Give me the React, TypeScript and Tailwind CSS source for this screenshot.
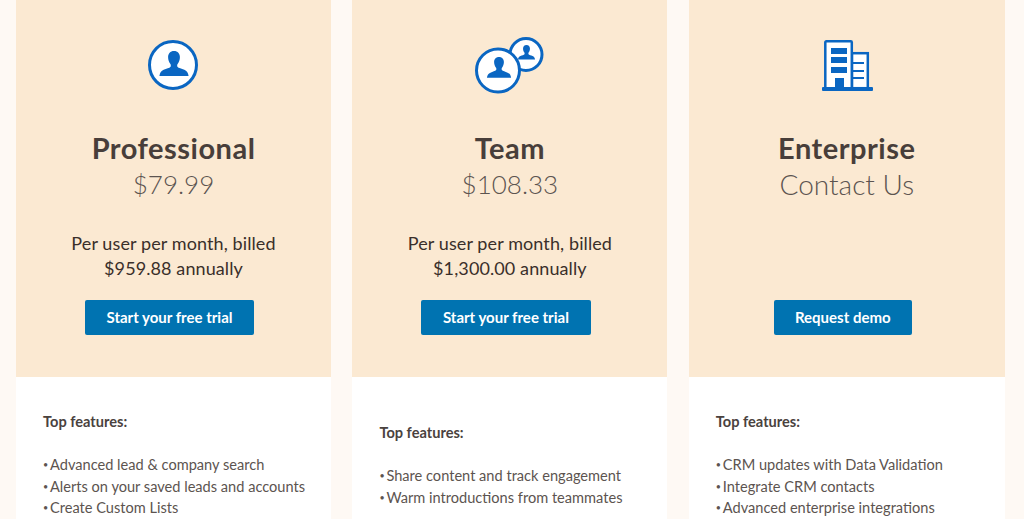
// Pricing plans: three cards with a tinted header and a white feature list.
import type { ReactNode } from "react";

function Bust({ cx, cy, s }: { cx: number; cy: number; s: number }) {
  // head and shoulders, drawn around a 0,0 center in a unit of s
  return (
    <path
      transform={`translate(${cx} ${cy}) scale(${s})`}
      d="M0 -15c-4.6 0-7.2 3.2-7.2 7.4 0 3.2 1 6.2 2.8 8.4 .6 .8 .7 2.6 .2 3.4-1.2 1.6-5.2 2.4-8.4 3.8-3 1.4-4.6 3.4-5.2 7.4h35.6c-.6-4-2.2-6-5.2-7.4-3.2-1.4-7.2-2.2-8.4-3.8-.5-.8-.4-2.6 .2-3.4 1.8-2.2 2.8-5.2 2.8-8.4 0-4.2-2.6-7.4-7.2-7.4z"
      fill="#0a66c2"
    />
  );
}

function ProIcon() {
  return (
    <svg width="50" height="50" viewBox="0 0 50 50">
      <circle cx="25" cy="25" r="23.5" fill="#fff" stroke="#0a66c2" strokeWidth="3" />
      <Bust cx={26} cy={23.3} s={0.82} />
    </svg>
  );
}

function TeamIcon() {
  return (
    <svg width="69" height="57" viewBox="0 0 69 57">
      <circle cx="51" cy="17.5" r="16" fill="#fff" stroke="#0a66c2" strokeWidth="3" />
      <Bust cx={51.5} cy={15.2} s={0.48} />
      <circle cx="23" cy="33.5" r="21.5" fill="#fff" stroke="#0a66c2" strokeWidth="3" />
      <Bust cx={24} cy={30.2} s={0.68} />
    </svg>
  );
}

function BuildingIcon() {
  return (
    <svg width="52" height="51" viewBox="0 0 52 51">
      <rect x="30" y="13.2" width="15.8" height="35" fill="#fff" stroke="#0a66c2" strokeWidth="2.5" />
      <rect x="3.3" y="1.3" width="26.5" height="47" rx="1" fill="#fff" stroke="#0a66c2" strokeWidth="2.5" />
      <rect x="9" y="8" width="16" height="6" fill="#0a66c2" />
      <rect x="9" y="17" width="16" height="6" fill="#0a66c2" />
      <rect x="9" y="27" width="16" height="6" fill="#0a66c2" />
      <rect x="13" y="38" width="9" height="10" fill="#0a66c2" />
      <rect x="31" y="22" width="11" height="2" fill="#0a66c2" />
      <rect x="31" y="30" width="11" height="2" fill="#0a66c2" />
      <rect x="31" y="37" width="11" height="2" fill="#0a66c2" />
      <rect x="0" y="47" width="51" height="4" rx="1" fill="#0a66c2" />
    </svg>
  );
}

type Plan = {
  name: string;
  price: string;
  priceSize: string;
  icon: ReactNode;
  iconBox: string;
  billed: string[];
  cta: string;
  ctaWidth: string;
  listTop: string;
  features: string[];
};

const PLANS: Plan[] = [
  {
    name: "Professional",
    price: "$79.99",
    priceSize: "text-[26px]",
    icon: <ProIcon />,
    iconBox: "pb-[6px] pr-[2px]",
    billed: ["Per user per month, billed", "$959.88 annually"],
    cta: "Start your free trial",
    ctaWidth: "w-[169px]",
    listTop: "pt-[34px]",
    features: ["Advanced lead & company search", "Alerts on your saved leads and accounts", "Create Custom Lists"],
  },
  {
    name: "Team",
    price: "$108.33",
    priceSize: "text-[26px]",
    icon: <TeamIcon />,
    iconBox: "pb-[2px]",
    billed: ["Per user per month, billed", "$1,300.00 annually"],
    cta: "Start your free trial",
    ctaWidth: "w-[170px]",
    listTop: "pt-[45px]",
    features: ["Share content and track engagement", "Warm introductions from teammates"],
  },
  {
    name: "Enterprise",
    price: "Contact Us",
    priceSize: "text-[28px]",
    icon: <BuildingIcon />,
    iconBox: "pb-[5px] pl-[3px]",
    billed: [],
    cta: "Request demo",
    ctaWidth: "w-[138px]",
    listTop: "pt-[34px]",
    features: ["CRM updates with Data Validation", "Integrate CRM contacts", "Advanced enterprise integrations"],
  },
];

function PlanCard({ plan }: { plan: Plan }) {
  return (
    <div className="flex flex-col min-w-0">
      <div className="h-[377px] shrink-0 bg-[#fbe9d2] flex flex-col items-center">
        <div className={`h-[96px] flex items-end justify-center ${plan.iconBox}`}>{plan.icon}</div>
        <h2 className="mt-[32px] text-[29px] leading-[40px] font-bold text-[#483e3a] tracking-[0.5px]">{plan.name}</h2>
        <div className={`${plan.priceSize} leading-[33px] font-light text-[#5c5450]`}>{plan.price}</div>
        <div className="mt-[30px] h-[51px] text-center text-[18px] leading-[25px] tracking-[0.1px] text-[#3a2f2a]">
          {plan.billed.map((line) => (
            <div key={line}>{line}</div>
          ))}
        </div>
        <button
          type="button"
          className={`mt-[18px] mr-2 h-[35px] ${plan.ctaWidth} rounded-[2px] bg-[#0073b1] text-[15px] font-bold text-white`}
        >
          {plan.cta}
        </button>
      </div>
      <div className={`flex-1 bg-white pl-[27px] ${plan.listTop} text-[14.6px] text-[#5c5450]`}>
        <div className="font-bold leading-[22px] text-[#4a423e]">Top features:</div>
        <ul className="mt-[21px]">
          {plan.features.map((f) => (
            <li key={f} className="flex leading-[21.7px]">
              <span className="w-[7px] shrink-0 text-[9px]">•</span>
              {f}
            </li>
          ))}
        </ul>
      </div>
    </div>
  );
}

export default function App() {
  return (
    <div className="h-[519px] overflow-hidden bg-[#fef9f4] pl-4 grid grid-cols-[315px_315px_316px] gap-x-[21.4px] font-['Lato','Noto_Sans',sans-serif]">
      {PLANS.map((p) => (
        <PlanCard key={p.name} plan={p} />
      ))}
    </div>
  );
}
